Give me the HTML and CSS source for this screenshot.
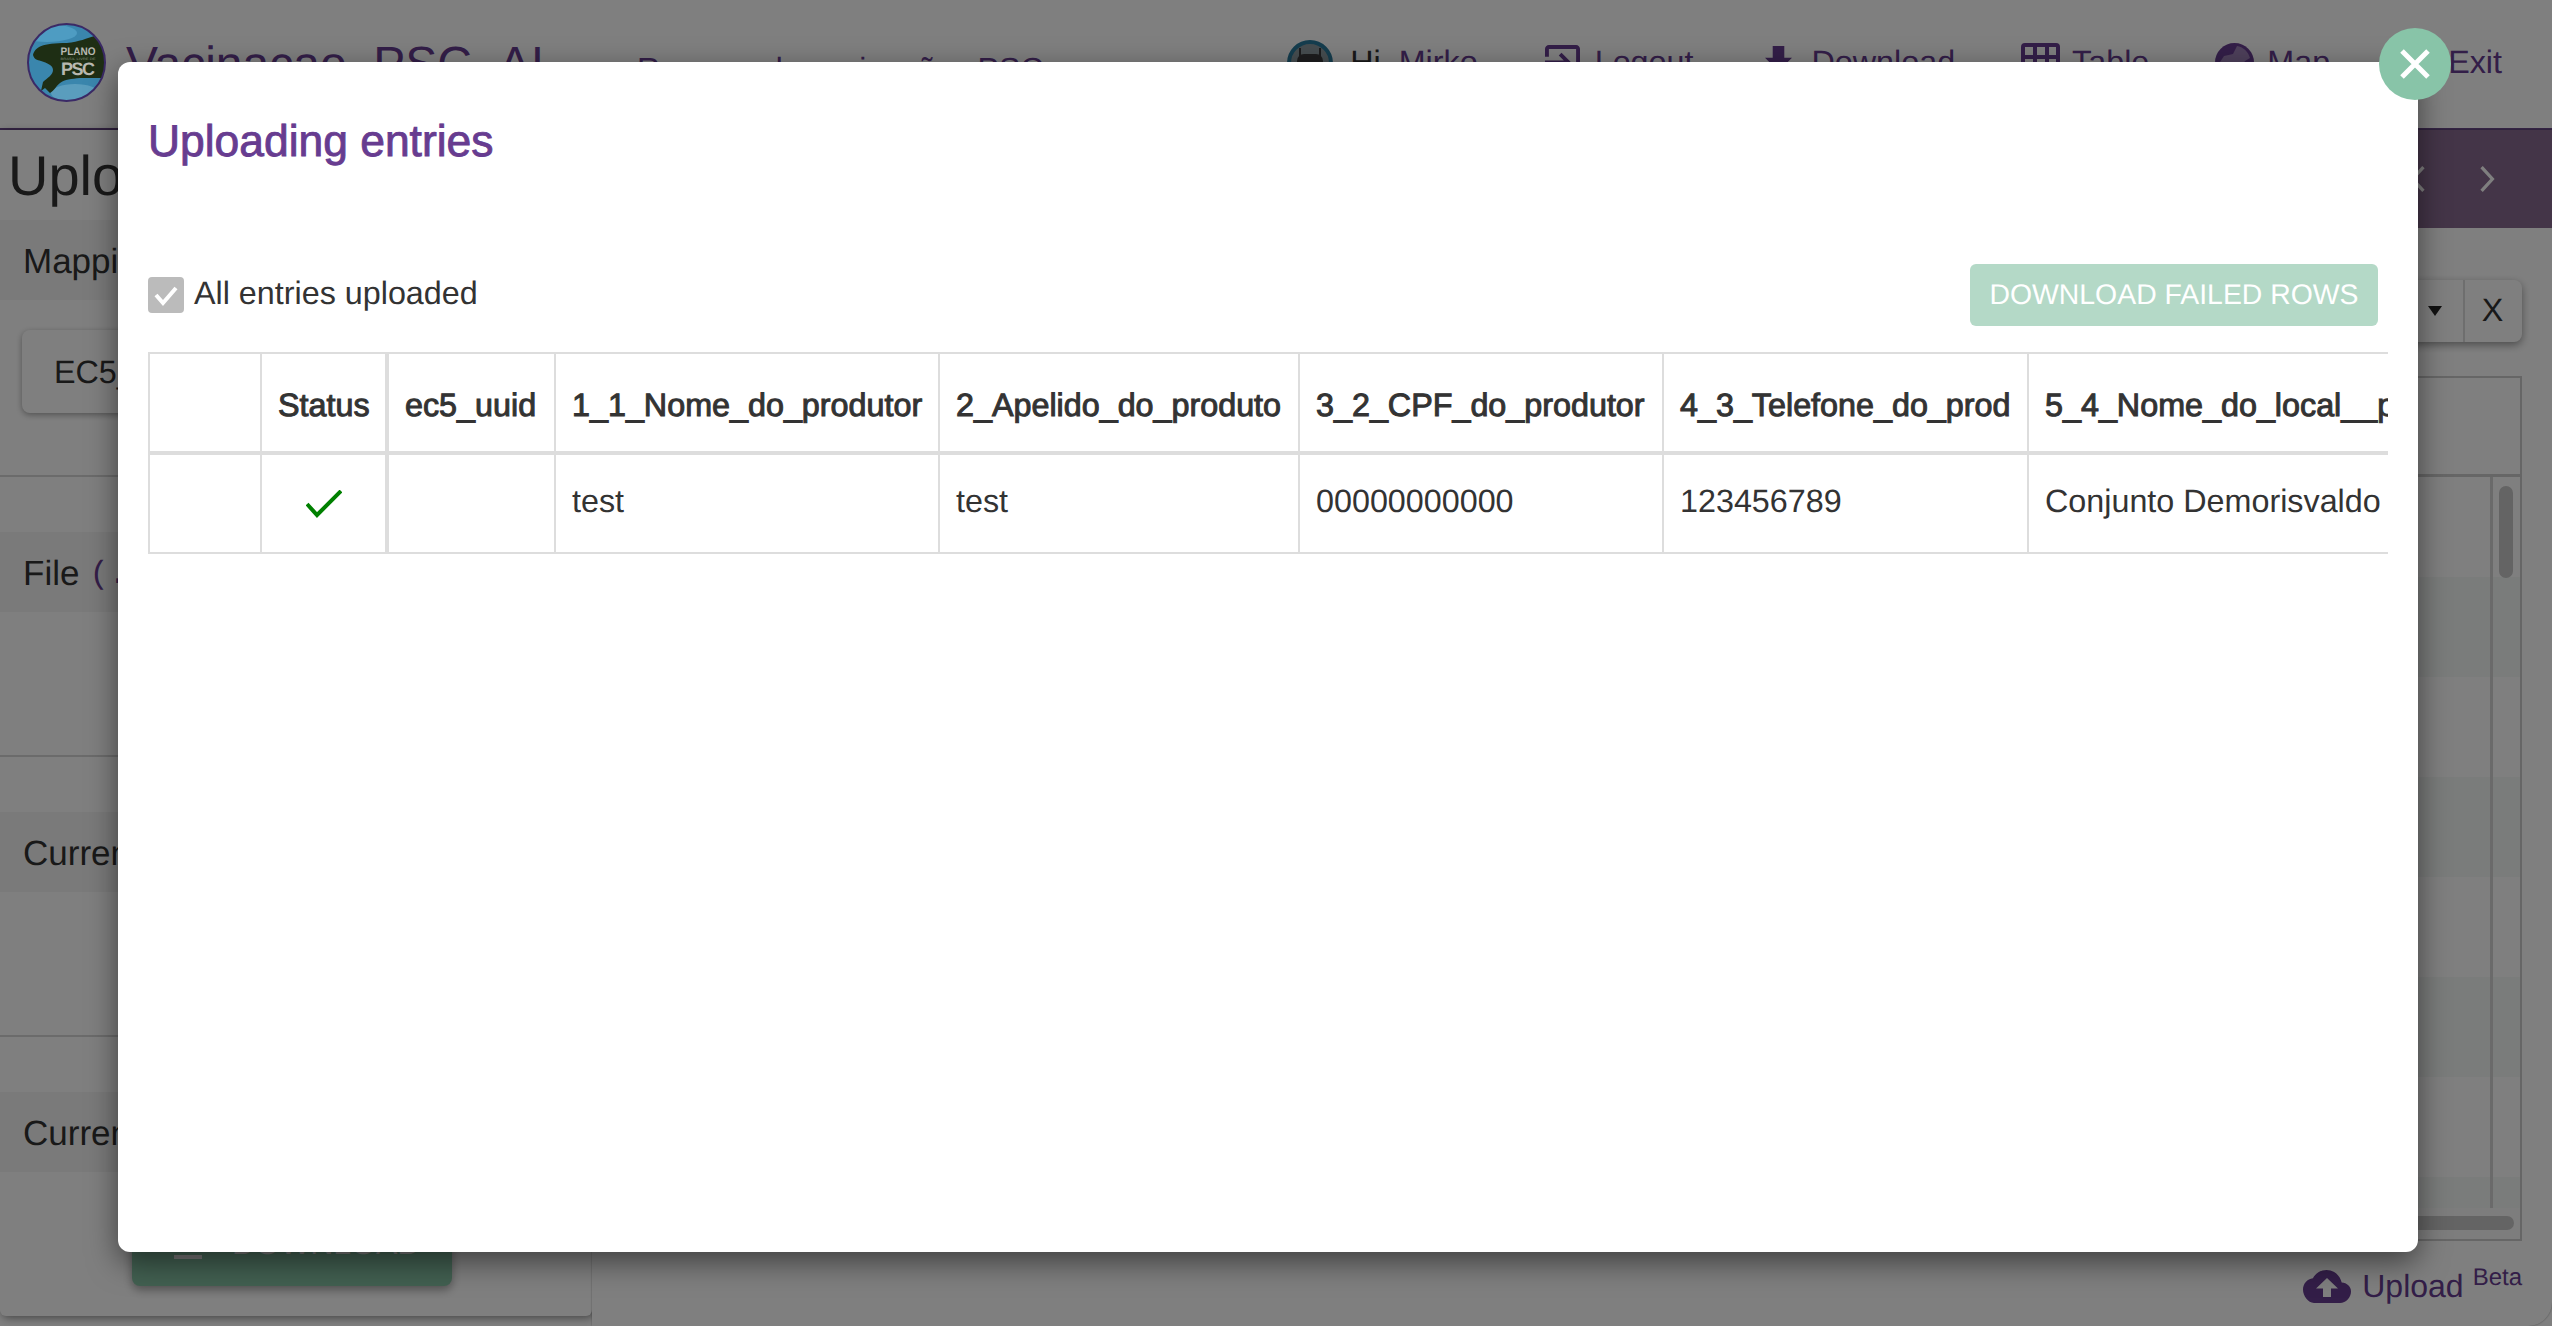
FILE: index.html
```html
<!DOCTYPE html>
<html lang="en">
<head>
<meta charset="utf-8">
<title>Uploading entries</title>
<link rel="stylesheet" href="styles.css">
</head>
<body>
<div class="app">
  <header class="nav">
    <svg class="logo" viewBox="0 0 79 79">
      <defs><clipPath id="lc"><circle cx="39.5" cy="39.5" r="38.5"/></clipPath></defs>
      <g clip-path="url(#lc)">
        <rect width="79" height="79" fill="#3a86ad"/>
        <ellipse cx="20" cy="10" rx="30" ry="9" fill="#4e9cc2"/>
        <ellipse cx="48" cy="70" rx="24" ry="9" fill="#5a9dbd"/>
        <path class="logo-land" d="M6 32 C8 24 15 20 40 20 C52 19 60 15 68 13 L76 20 L79 40 L76 55 L53 55 C44 56 38 56 33 60 C29 63 27 68 23 70 L18 65 L14 68 L16 59 C20 55 26 52 26 47 C26 42 20 40 14 38 C10 37 7 36 6 32 Z"/>
        <text class="logo-t1" x="33.5" y="32" textLength="35" lengthAdjust="spacingAndGlyphs">PLANO</text>
        <text class="logo-t2" x="33.5" y="37" textLength="35" lengthAdjust="spacingAndGlyphs">BRASIL LIVRE DE</text>
        <text class="logo-t3" x="34" y="52" textLength="34">PSC</text>
      </g>
      <circle class="logo-ring" cx="39.5" cy="39.5" r="38.5"/>
    </svg>
    <div class="brand">
      <span class="brand-title">Vacinacao_PSC_AI</span>
      <span class="brand-sub">Resumo de vacinação <span class="brand-psc">PSC</span></span>
    </div>
    <nav class="nav-right">
      <span class="item item-user">
        <svg class="avatar" viewBox="0 0 46 46"><circle cx="23" cy="23" r="21" fill="#8c9aa0" stroke="#2a7a9c" stroke-width="4"/><rect x="10" y="14" width="26" height="24" rx="7" fill="#3a3a3c"/><path d="M13 17V8M33 17V8" stroke="#3a3a3c" stroke-width="2"/></svg>
        <span class="plain">Hi,</span> <span>Mirko</span>
      </span>
      <span class="item item-logout">
        <svg class="ic ic-logout" viewBox="3 3 18 18"><path d="M10.09 15.59 11.5 17l5-5-5-5-1.41 1.41L12.67 11H3v2h9.67zM19 3H5c-1.11 0-2 .9-2 2v4h2V5h14v14H5v-4H3v4c0 1.1.89 2 2 2h14c1.1 0 2-.9 2-2V5c0-1.1-.9-2-2-2z"/></svg>
        <span>Logout</span>
      </span>
      <span class="item item-dl">
        <svg class="ic ic-dl" viewBox="5 3 14 17"><path d="M19 9h-4V3H9v6H5l7 7 7-7zM5 18v2h14v-2z"/></svg>
        <span>Download</span>
      </span>
      <span class="item item-table">
        <svg class="ic ic-table" viewBox="0 0 39 39"><path d="M4 0h31a4 4 0 0 1 4 4v31a4 4 0 0 1-4 4H4a4 4 0 0 1-4-4V4a4 4 0 0 1 4-4zm0 4v8h8V4zm12 0v8h8V4zm12 0v8h7V4zM4 16v8h8v-8zm12 0v8h8v-8zm12 0v8h7v-8zM4 28v7h8v-7zm12 0v7h8v-7zm12 0v7h7v-7z" fill-rule="evenodd"/></svg>
        <span>Table</span>
      </span>
      <span class="item item-map">
        <svg class="ic ic-map" viewBox="0 0 39 39"><circle cx="19.500" cy="19.500" r="19.500"/><path class="ic-cut" d="M22 3c6 1 11 5 13 12l-5 3-3 5 1 9c-2 2-4 3-6 3l1-8-5-4-7 1-6-5 4-6 9-2z"/></svg>
        <span>Map</span>
      </span>
      <span class="item item-exit"><span>Exit</span></span>
    </nav>
  </header>

  <div class="main">
    <aside class="side">
      <h1 class="side-title">Upload</h1>
      <section class="sec sec-first">
        <div class="sec-head">Mapping</div>
        <div class="sec-body"><div class="map-btn">EC5_AUTO</div></div>
      </section>
      <section class="sec">
        <div class="sec-head">File <span class="sec-note">(.csv)</span></div>
      </section>
      <section class="sec">
        <div class="sec-head">Current</div>
      </section>
      <section class="sec sec-last">
        <div class="sec-head">Current</div>
        <div class="dl-btn">
          <svg class="dl-btn-ic" viewBox="5 3 14 17"><path d="M19 9h-4V3H9v6H5l7 7 7-7zM5 18v2h14v-2z"/></svg>
          <span class="dl-btn-text">DOWNLOAD</span>
        </div>
      </section>
    </aside>

    <div class="content">
      <div class="band">
        <svg class="chev" viewBox="0 0 16 24"><path d="M13 1 3 12l10 11"/></svg>
        <svg class="chev" viewBox="0 0 16 24"><path d="M3 1l10 11L3 23"/></svg>
      </div>
      <div class="toolbar">
        <div class="tool-group">
          <span class="tool-caret"></span>
          <span class="tool-x">X</span>
        </div>
      </div>
      <div class="grid">
        <div class="grid-head"></div>
        <div class="grid-body">
          <div class="grid-row"></div>
          <div class="grid-row alt"></div>
          <div class="grid-row"></div>
          <div class="grid-row alt"></div>
          <div class="grid-row"></div>
          <div class="grid-row alt"></div>
          <div class="grid-row"></div>
          <div class="grid-row alt short"></div>
          <div class="vbar"><span class="vthumb"></span></div>
        </div>
        <div class="hbar"><span class="hthumb"></span></div>
      </div>
      <div class="upload">
        <svg class="cloud" viewBox="0 0 48 33"><path d="M38.7 12.500C37.100 5.300 31 0 23.500 0 17.600 0 12.400 3.400 9.900 8.300 4.300 9 0 13.800 0 19.600 0 25.900 5 33 11 33h26c6 0 11-5.500 11-11.500 0-5.300-4.100-8.600-9.300-9zM28 18.500V27h-8v-8.500h-7L24 8l11 10.500z"/></svg>
        <span class="upload-label">Upload</span>
        <span class="upload-beta">Beta</span>
      </div>
    </div>
  </div>
</div>

<div class="overlay"></div>

<div class="modal">
  <button class="close" type="button" aria-label="Close">
    <svg viewBox="0 0 30 30"><path d="M2 2l26 26M28 2 2 28"/></svg>
  </button>
  <h2 class="modal-title">Uploading entries</h2>
  <div class="modal-row">
    <label class="check-label">
      <span class="check">
        <svg viewBox="0 0 36 36"><path d="M8 18l7 8 13-15"/></svg>
      </span>
      <span class="check-text">All entries uploaded</span>
    </label>
    <button class="failed" type="button">DOWNLOAD FAILED ROWS</button>
  </div>
  <div class="table-wrap">
    <table class="entries">
      <thead>
        <tr>
          <th class="c1"></th>
          <th class="c2">Status</th>
          <th class="c3">ec5_uuid</th>
          <th class="c4">1_1_Nome_do_produtor</th>
          <th class="c5">2_Apelido_do_produto</th>
          <th class="c6">3_2_CPF_do_produtor</th>
          <th class="c7">4_3_Telefone_do_prod</th>
          <th class="c8">5_4_Nome_do_local__p</th>
        </tr>
      </thead>
      <tbody>
        <tr>
          <td class="c1"></td>
          <td class="c2"><svg class="tick" viewBox="0 0 36 28"><path d="M1 14l10 11L35 1"/></svg></td>
          <td class="c3"></td>
          <td class="c4">test</td>
          <td class="c5">test</td>
          <td class="c6">00000000000</td>
          <td class="c7">123456789</td>
          <td class="c8">Conjunto Demorisvaldo</td>
        </tr>
      </tbody>
    </table>
  </div>
</div>
</body>
</html>
```

FILE: styles.css
```css
* { box-sizing: border-box; }
html, body { margin: 0; height: 100%; }
body {
  position: relative;
  overflow: hidden;
  background: #fff;
  color: #333;
  font-family: "Liberation Sans", Arial, sans-serif;
  font-size: 32.300px;
  text-rendering: geometricPrecision;
}
.app { display: flex; flex-direction: column; height: 1326px; }

/* navbar */
.nav {
  flex: none;
  display: flex;
  align-items: center;
  height: 130px;
  padding: 0 50px 3px 27px;
  background: #fff;
  border-bottom: 2px solid #6b4a8a;
  color: #673c90;
}
.logo { position: relative; z-index: 11; width: 79px; height: 79px; flex: none; }
.logo-land { fill: #1e2e14; }
.logo-ring { fill: none; stroke: #3b2a66; stroke-width: 2; }
.logo-t1 { fill: #b8b8b0; font-size: 11px; font-weight: 700; }
.logo-t2 { fill: #7f8a78; font-size: 3.300px; }
.logo-t3 { fill: #b8b8b0; font-size: 18px; font-weight: 700; }
.brand { display: flex; align-items: baseline; margin: 4px 0 0 20px; }
.brand-title { font-size: 48px; }
.brand-sub { margin-left: 93px; font-size: 32px; }
.brand-psc { margin-left: 15px; }
.nav-right { display: flex; align-items: center; margin-left: auto; }
.item { display: flex; align-items: center; gap: 12px; white-space: pre; }
.plain { color: #333; }
.item-user { gap: 9px; }
.item-user .plain { margin-left: 8px; }
.item-logout { margin-left: 67px; gap: 15px; }
.item-dl { margin-left: 72px; gap: 19px; }
.item-table { margin-left: 66px; }
.item-map { margin-left: 66px; gap: 13px; }
.item-exit { margin-left: 118px; }
.avatar { width: 46px; height: 46px; }
.ic { fill: #673c90; flex: none; }
.ic-logout { width: 35px; height: 35px; }
.ic-dl { width: 27px; height: 33px; }
.ic-table, .ic-map { width: 39px; height: 39px; }
.ic-cut { fill: #fff; opacity: 0.35; }

/* page behind the dialog */
.main { flex: 1; display: flex; min-height: 0; }
.side {
  flex: none;
  width: 592px;
  height: 1186px;
  border-radius: 0 0 6px 6px;
  box-shadow: 2px 2px 8px rgba(0, 0, 0, 0.45);
  overflow: hidden;
  background: #fff;
}
.side-title { margin: 0; height: 90px; padding: 14px 0 0 8px; font-size: 56px; font-weight: 400; line-height: 64px; color: #333; }
.sec { height: 280px; padding-top: 55px; border-bottom: 2px solid #d6d6d6; }
.sec-first { height: 257px; padding-top: 0; }
.sec-last { border-bottom: none; }
.sec-head {
  display: flex;
  align-items: center;
  gap: 10px;
  height: 80px;
  padding: 4px 0 0 23px;
  background: #f5f5f5;
  font-size: 35px;
}
.sec-note { color: #673c90; font-family: "Liberation Mono", monospace; font-size: 32px; }
.sec-body { padding: 30px 22px 0; }
.map-btn {
  width: 400px;
  height: 83px;
  padding: 24px 32px;
  border-radius: 8px;
  background: #fff;
  box-shadow: 0 2px 6px rgba(0, 0, 0, 0.35);
}
.dl-btn {
  display: flex;
  align-items: flex-start;
  gap: 30px;
  width: 320px;
  height: 80px;
  margin: 34px 0 0 132px;
  padding: 18px 0 0 42px;
  border-radius: 8px;
  background: #85c0a3;
  box-shadow: 0 4px 10px rgba(0, 0, 0, 0.35);
  color: #eee;
  font-size: 32px;
}
.dl-btn-text { margin-top: 1px; }
.dl-btn-ic { width: 28px; height: 36px; fill: #f0f0f0; }

.content {
  flex: 1;
  min-width: 0;
  display: flex;
  flex-direction: column;
  border-radius: 0 0 24px 0;
  background: #fff;
  box-shadow: 0 0 2px rgba(0, 0, 0, 0.4);
}
.band {
  flex: none;
  display: flex;
  align-items: center;
  justify-content: flex-end;
  gap: 51px;
  height: 98px;
  padding-right: 56px;
  background: #886a90;
}
.chev { width: 18px; height: 26px; fill: none; stroke: #fff; stroke-width: 3; }
.toolbar { flex: none; display: flex; justify-content: flex-end; height: 62px; margin-top: 52px; padding-right: 30px; }
.tool-group {
  display: flex;
  align-items: center;
  width: 320px;
  justify-content: flex-end;
  border-radius: 8px;
  background: #fff;
  box-shadow: 0 3px 8px rgba(0, 0, 0, 0.4);
}
.tool-caret {
  width: 0;
  height: 0;
  margin-right: 21px;
  border-top: 10px solid #222;
  border-left: 7px solid transparent;
  border-right: 7px solid transparent;
}
.tool-x {
  width: 59px;
  height: 100%;
  padding-right: 2px;
  border-left: 2px solid #ddd;
  color: #333;
  text-align: center;
  line-height: 60px;
}
.grid {
  flex: none;
  height: 865px;
  margin: 34px 30px 0 0;
  border: 2px solid #ccc;
  display: flex;
  flex-direction: column;
}
.grid-head { flex: none; height: 99px; border-bottom: 3px solid #ccc; }
.grid-body { position: relative; flex: 1; min-height: 0; overflow: hidden; }
.grid-row { height: 100px; background: #fff; }
.grid-row.alt { background: #f4f9f6; }
.grid-row.short { height: 32px; }
.vbar { position: absolute; top: 0; right: 0; bottom: 0; width: 30px; border-left: 3px solid #d4d4d4; }
.vthumb { position: absolute; top: 9px; left: 6px; width: 14px; height: 92px; border-radius: 7px; background: #c8c8c8; }
.hbar { position: relative; flex: none; height: 31px; background: #fafafa; }
.hthumb { position: absolute; top: 8px; right: 6px; width: 900px; height: 14px; border-radius: 7px; background: #c8c8c8; }
.upload { flex: 1; display: flex; align-items: flex-start; padding: 27px 30px 0 0; justify-content: flex-end; color: #673c90; font-size: 32px; }
.cloud { width: 48px; height: 33px; margin: 2px 11px 0 0; fill: #673c90; }
.upload-label { line-height: 36px; }
.upload-beta { margin: -4px 0 0 9px; font-size: 24px; line-height: 28px; }

/* dialog */
.overlay { position: absolute; inset: 0; z-index: 10; background: rgba(0, 0, 0, 0.5); }
.modal {
  position: absolute;
  z-index: 12;
  top: 62px;
  left: 118px;
  width: 2300px;
  height: 1190px;
  padding: 54px 30px 0;
  border-radius: 12px;
  background: #fff;
  box-shadow: 0 10px 30px rgba(0, 0, 0, 0.5);
}
.close {
  position: absolute;
  top: -34px;
  right: -33px;
  display: flex;
  align-items: center;
  justify-content: center;
  width: 72px;
  height: 72px;
  padding: 0;
  border: none;
  border-radius: 50%;
  background: #88c4a8;
}
.close svg { width: 30px; height: 30px; fill: none; stroke: #fff; stroke-width: 5; }
.modal-title {
  margin: 0 0 96px;
  color: #673c90;
  font-size: 44.400px;
  font-weight: 400;
  line-height: 52px;
  -webkit-text-stroke: 0.9px #673c90;
}
.modal-row {
  display: flex;
  align-items: center;
  justify-content: space-between;
  height: 62px;
  margin-bottom: 26px;
  padding-right: 10px;
}
.check-label { display: flex; align-items: center; gap: 10px; color: #333; }
.check-text { margin-top: -3px; }
.check { width: 36px; height: 36px; border-radius: 4px; background: #bbb; }
.check svg { display: block; width: 36px; height: 36px; fill: none; stroke: #fff; stroke-width: 4; }
.failed {
  width: 408px;
  height: 62px;
  padding: 0;
  border: none;
  border-radius: 6px;
  background: #b4d9c7;
  color: #fff;
  font-family: inherit;
  font-size: 28.400px;
  text-rendering: geometricPrecision;
}
.table-wrap { overflow: hidden; }
.entries { width: 2541px; table-layout: fixed; border-collapse: separate; border-spacing: 0; color: #333; }
.entries th, .entries td {
  padding: 0 0 0 16px;
  border-right: 2px solid #ddd;
  text-align: left;
  vertical-align: top;
  white-space: nowrap;
  overflow: hidden;
  line-height: 46px;
}
.entries th {
  height: 103px;
  padding-top: 28px;
  border-top: 2px solid #ddd;
  border-bottom: 4px solid #ddd;
  font-size: 32.300px;
  font-weight: 400;
  -webkit-text-stroke: 1px #333;
}
.entries td { height: 99px; padding-top: 23px; border-bottom: 2px solid #ddd; }
.entries .c1 { width: 114px; border-left: 2px solid #ddd; }
.entries .c2 { width: 127px; border-right-width: 4px; }
.entries .c3 { width: 167px; }
.entries .c4 { width: 384px; }
.entries .c5 { width: 360px; }
.entries .c6 { width: 364px; }
.entries .c7 { width: 365px; }
.entries .c8 { width: 660px; border-right: none; }
.tick { display: block; width: 36px; height: 28px; margin: 12px 0 0 28px; fill: none; stroke: #008000; stroke-width: 4; }
```
